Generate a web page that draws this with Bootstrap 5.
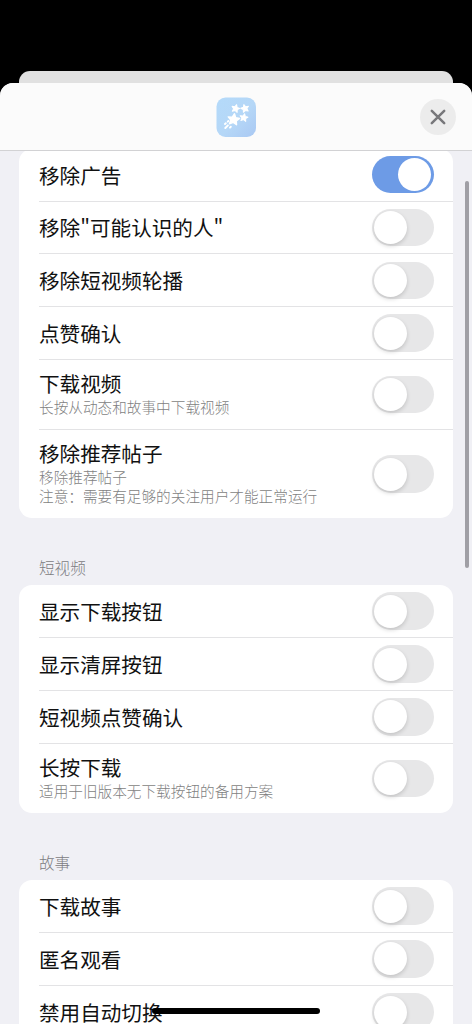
<!DOCTYPE html>
<html lang="zh-CN">
<head>
<meta charset="utf-8">
<meta name="viewport" content="width=device-width, initial-scale=1">
<title>设置</title>
<link href="https://cdn.jsdelivr.net/npm/bootstrap@5.3.0/dist/css/bootstrap.min.css" rel="stylesheet">
<style>
body{height:1024px;background:#000;font-family:"Noto Sans CJK SC",sans-serif;color:#111}
.screen{height:1024px;padding-top:71px}
.sheet-behind{height:12px;margin:0 19px;background:#e1e1e1;border-radius:11px 11px 0 0}
.sheet-corners{background:linear-gradient(90deg,#000 19px,#e1e1e1 19px,#e1e1e1 453px,#000 453px)}
.sheet{height:941px;background:#f0f0f5;border-radius:13px 13px 0 0}
.topbar{height:68px;background:#fbfbfb;border-bottom:1px solid #d2d2d4;z-index:2}
.app-icon{width:40px;height:40px;margin-left:216px}
.close-btn{width:36px;height:36px;margin-right:16px;background:#ececec}
.scroll-area{height:873px;padding:0 19px}
.group{border-radius:13px;background:#fff;margin:0}
.group-first{margin-top:-2.3px}
.setting{height:52.85px;margin-left:20px;padding-right:19.5px;border-bottom:1px solid #e3e3e5}
.setting:last-child{border-bottom:0}
.setting-2{height:70px}
.setting-3{height:88.2px}
.setting-2:last-child{height:69.3px}
.title{font-size:20.6px;line-height:28px}
.setting-2 .title,.setting-3 .title{line-height:27px}
.setting-2 .labels,.setting-3 .labels{padding-bottom:3px}
.note{font-size:14.65px;line-height:19.3px;color:#7f7f82;font-weight:300}
.group-name{font-size:15.6px;line-height:20px;color:#7c7c81;height:67px;padding:38.5px 0 0 20px;font-weight:300}
.form-switch .form-check-input.toggle{width:61.5px;height:37.5px;margin:0;border:0;border-radius:19px;background:#e7e7e8;box-shadow:none}
.toggle::after{content:"";display:block;width:33px;height:33px;margin:2.25px;border-radius:50%;background:#fff;box-shadow:0 2px 4px rgba(0,0,0,.16)}
.form-switch .form-check-input.toggle:checked{background:#6d9be6}
.toggle:checked::after{margin-left:26.25px;box-shadow:none}
.scrollbar-thumb{right:3px;top:98px;width:4px;height:387px;border-radius:2px;background:#a09fa5;z-index:3}
.home-bar{left:152px;bottom:10px;width:168px;height:6px;border-radius:3px;background:#000;z-index:3}
.last-row .title{line-height:24px;padding-bottom:1px}
</style>
</head>
<body>
<main class="screen overflow-hidden">
  <div class="sheet-behind"></div>
  <div class="sheet-corners">
  <section class="sheet position-relative overflow-hidden">
    <header class="topbar position-relative d-flex align-items-center justify-content-between">
      <svg class="app-icon" viewBox="0 0 40 40" aria-hidden="true">
        <defs>
          <linearGradient id="sky" x1="0" y1="0" x2="1" y2="1"><stop offset="0" stop-color="#b4dafa"/><stop offset=".55" stop-color="#b5d7f7"/><stop offset="1" stop-color="#a9c8f3"/></linearGradient>
          <path id="star" d="M0-5 1.5-1.8 5-1.5 2.4.9 3.1 4.3 0 2.6-3.1 4.3-2.4.9-5-1.5-1.5-1.8Z" stroke-linejoin="round"/>
        </defs>
        <rect x=".5" y=".5" width="39.5" height="39.5" rx="9" fill="url(#sky)"/>
        <g fill="#fff" stroke="#fff" stroke-width="1.2">
          <use href="#star" transform="translate(17.7 22.4) rotate(8) scale(1.15)"/>
          <use href="#star" transform="translate(19.6 11.5) rotate(15) scale(.8)"/>
          <use href="#star" transform="translate(28.9 11.4) rotate(-15) scale(.8)"/>
          <use href="#star" transform="translate(27.9 20.6) rotate(10) scale(.8)"/>
        </g>
        <path d="M9 27l.8-.8M11.8 24.6l.6-.6M9.3 31l2.6-2.6M14 30.6l.8-.8" stroke="#fff" stroke-width="2" stroke-linecap="round"/>
      </svg>
      <button class="close-btn btn rounded-circle border-0 p-0 d-flex align-items-center justify-content-center" type="button" aria-label="关闭">
        <svg width="16" height="16" viewBox="0 0 16 16"><path d="M1.8 1.8 14.2 14.2M14.2 1.8 1.8 14.2" stroke="#78787b" stroke-width="2.5" stroke-linecap="round"/></svg>
      </button>
    </header>
    <div class="scroll-area">
      <ul class="group group-first list-unstyled">
        <li class="setting d-flex align-items-center justify-content-between"><div class="title">移除广告</div><div class="form-switch p-0 m-0 d-flex"><input class="toggle form-check-input" type="checkbox" role="switch" checked></div></li>
        <li class="setting d-flex align-items-center justify-content-between"><div class="title">移除"可能认识的人"</div><div class="form-switch p-0 m-0 d-flex"><input class="toggle form-check-input" type="checkbox" role="switch"></div></li>
        <li class="setting d-flex align-items-center justify-content-between"><div class="title">移除短视频轮播</div><div class="form-switch p-0 m-0 d-flex"><input class="toggle form-check-input" type="checkbox" role="switch"></div></li>
        <li class="setting d-flex align-items-center justify-content-between"><div class="title">点赞确认</div><div class="form-switch p-0 m-0 d-flex"><input class="toggle form-check-input" type="checkbox" role="switch"></div></li>
        <li class="setting setting-2 d-flex align-items-center justify-content-between"><div class="labels"><div class="title">下载视频</div><div class="note">长按从动态和故事中下载视频</div></div><div class="form-switch p-0 m-0 d-flex"><input class="toggle form-check-input" type="checkbox" role="switch"></div></li>
        <li class="setting setting-3 d-flex align-items-center justify-content-between"><div class="labels"><div class="title">移除推荐帖子</div><div class="note">移除推荐帖子<br>注意：需要有足够的关注用户才能正常运行</div></div><div class="form-switch p-0 m-0 d-flex"><input class="toggle form-check-input" type="checkbox" role="switch"></div></li>
      </ul>
      <h2 class="group-name m-0">短视频</h2>
      <ul class="group list-unstyled">
        <li class="setting d-flex align-items-center justify-content-between"><div class="title">显示下载按钮</div><div class="form-switch p-0 m-0 d-flex"><input class="toggle form-check-input" type="checkbox" role="switch"></div></li>
        <li class="setting d-flex align-items-center justify-content-between"><div class="title">显示清屏按钮</div><div class="form-switch p-0 m-0 d-flex"><input class="toggle form-check-input" type="checkbox" role="switch"></div></li>
        <li class="setting d-flex align-items-center justify-content-between"><div class="title">短视频点赞确认</div><div class="form-switch p-0 m-0 d-flex"><input class="toggle form-check-input" type="checkbox" role="switch"></div></li>
        <li class="setting setting-2 d-flex align-items-center justify-content-between"><div class="labels"><div class="title">长按下载</div><div class="note">适用于旧版本无下载按钮的备用方案</div></div><div class="form-switch p-0 m-0 d-flex"><input class="toggle form-check-input" type="checkbox" role="switch"></div></li>
      </ul>
      <h2 class="group-name m-0">故事</h2>
      <ul class="group list-unstyled">
        <li class="setting d-flex align-items-center justify-content-between"><div class="title">下载故事</div><div class="form-switch p-0 m-0 d-flex"><input class="toggle form-check-input" type="checkbox" role="switch"></div></li>
        <li class="setting d-flex align-items-center justify-content-between"><div class="title">匿名观看</div><div class="form-switch p-0 m-0 d-flex"><input class="toggle form-check-input" type="checkbox" role="switch"></div></li>
        <li class="setting last-row d-flex align-items-center justify-content-between"><div class="title">禁用自动切换</div><div class="form-switch p-0 m-0 d-flex"><input class="toggle form-check-input" type="checkbox" role="switch"></div></li>
      </ul>
    </div>
    <div class="scrollbar-thumb position-absolute"></div>
    <div class="home-bar position-absolute"></div>
  </section>
  </div>
</main>
<script src="https://cdn.jsdelivr.net/npm/bootstrap@5.3.0/dist/js/bootstrap.bundle.min.js"></script>
</body>
</html>
